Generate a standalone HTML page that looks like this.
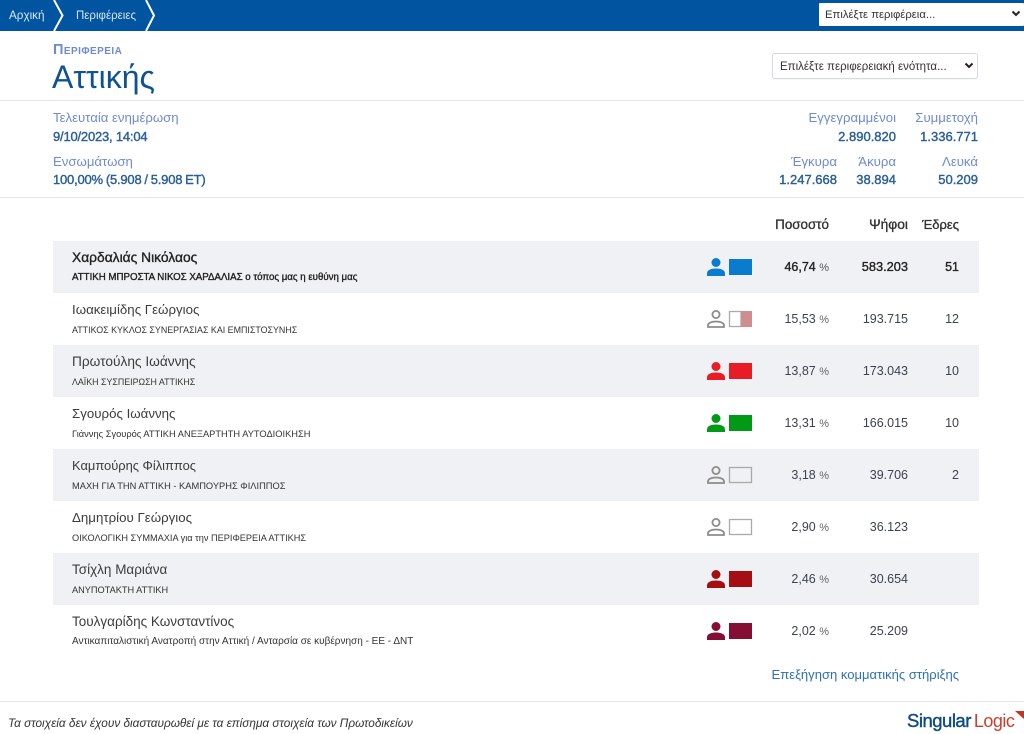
<!DOCTYPE html>
<html lang="el"><head><meta charset="utf-8"><title>Αττικής</title>
<style>
html,body{margin:0;padding:0;background:#fff}
body{width:1024px;height:734px;position:relative;overflow:hidden;font-family:"Liberation Sans",sans-serif;color:#333}
.a{position:absolute;white-space:nowrap;line-height:16px}
.r{text-align:right}
.lb{color:#6f8bd0;font-size:13.200px}
.v{color:#2a5f96;font-size:13px;-webkit-text-stroke:.4px #2a5f96}
.hline{position:absolute;left:0;width:1024px;height:1px;background:#e4e6ea}
.row{position:absolute;left:53px;width:926px;height:52px}
.row.g{background:#f0f1f4}
.nm{left:19px;top:9px;font-size:13.300px;color:#3c3c3c}
.pt{left:19px;top:29px;font-size:9.200px;color:#333}
.pc{right:150px;top:18px;width:90px;text-align:right;font-size:12.500px;color:#3c4250}
.pc small{font-size:11px;color:#666}
.vt{right:71px;top:18px;font-size:12.500px;color:#3c4250}
.st{right:20px;top:18px;font-size:12.500px;color:#3c4250}
.b .nm,.b .pt,.b .pc,.b .vt,.b .st{color:#222;-webkit-text-stroke:.35px #222}
.b .vt{font-size:12.800px}
.b .pc small{-webkit-text-stroke:0;color:#555}
.ic{position:absolute;left:654px;top:17px}
.th{top:217px;font-size:13.400px;color:#333;-webkit-text-stroke:.35px #333}
.sel{position:absolute;background:#fff;box-sizing:border-box;color:#333;font-size:11.500px;line-height:14px}
</style></head><body>

<div style="position:absolute;left:0;top:0;width:1024px;height:31px;background:#0054a0"></div>
<svg style="position:absolute;left:0;top:0" width="170" height="31" viewBox="0 0 170 31" fill="none" stroke="#fff" stroke-width="2">
<path d="M54 0l8.500 15.500L54 31"/><path d="M146 0l8 15.500L146 31"/></svg>
<div class="a" style="left:9px;top:8px;font-size:11.700px;color:#dce8f4">Αρχική</div>
<div class="a" style="left:76px;top:8px;font-size:11.500px;color:#dce8f4">Περιφέρειες</div>
<div class="sel" style="left:819px;top:3px;width:205px;height:23px;border-radius:1px;padding:5px 0 0 6px;font-size:11.300px">Επιλέξτε περιφέρεια...</div>
<svg style="position:absolute;left:1011px;top:10px" width="10" height="8" viewBox="0 0 10 8" fill="none" stroke="#222" stroke-width="2"><path d="M1.500 1.500L5 5l3.500-3.500"/></svg>

<div class="a" style="left:53px;top:42px;font-size:14.500px;font-weight:700;color:#6f8bd0;font-variant:small-caps;letter-spacing:.45px">Περιφερεια</div>
<div class="a" style="left:52px;top:60px;font-size:32px;line-height:34px;color:#0f5290">Αττικής</div>
<div class="sel" style="left:772px;top:53px;width:206px;height:26px;border:1px solid #d5d9e0;border-radius:3px;padding:6px 0 0 7px;font-size:11.500px;box-shadow:0 1px 1px rgba(0,0,0,.04)">Επιλέξτε περιφερειακή ενότητα...</div>
<svg style="position:absolute;left:964px;top:62px" width="10" height="8" viewBox="0 0 10 8" fill="none" stroke="#222" stroke-width="2"><path d="M1.500 1.500L5 5l3.500-3.500"/></svg>

<div class="hline" style="top:100px"></div>
<div class="a lb" style="left:53px;top:110px">Τελευταία ενημέρωση</div>
<div class="a v" style="left:53px;top:129px;letter-spacing:-.2px">9/10/2023, 14:04</div>
<div class="a lb" style="left:53px;top:154px">Ενσωμάτωση</div>
<div class="a v" style="left:53px;top:172px;letter-spacing:-.2px;word-spacing:-.5px">100,00% (5.908 / 5.908 ET)</div>

<div class="a lb r" style="right:128px;top:110px">Εγγεγραμμένοι</div>
<div class="a v r" style="right:128px;top:129px">2.890.820</div>
<div class="a lb r" style="right:46px;top:110px">Συμμετοχή</div>
<div class="a v r" style="right:46px;top:129px">1.336.771</div>
<div class="a lb r" style="right:187px;top:154px">Έγκυρα</div>
<div class="a v r" style="right:187px;top:172px">1.247.668</div>
<div class="a lb r" style="right:128px;top:154px">Άκυρα</div>
<div class="a v r" style="right:128px;top:172px">38.894</div>
<div class="a lb r" style="right:46px;top:154px">Λευκά</div>
<div class="a v r" style="right:46px;top:172px">50.209</div>
<div class="hline" style="top:197px"></div>

<div class="a th r" style="right:195px">Ποσοστό</div>
<div class="a th r" style="right:116px;font-size:13.800px">Ψήφοι</div>
<div class="a th r" style="right:65px;font-size:13px">Έδρες</div>

<div class="row g b" style="top:241px">
<div class="a nm" style="font-size:13.800px">Χαρδαλιάς Νικόλαος</div><div class="a pt" style="font-size:9.700px">ΑΤΤΙΚΗ ΜΠΡΟΣΤΑ ΝΙΚΟΣ ΧΑΡΔΑΛΙΑΣ ο τόπος μας η ευθύνη μας</div>
<svg class="ic" width="46" height="18" viewBox="0 0 46 18"><circle cx="9" cy="4.500" r="4.500" fill="#0a7ccf"/><path d="M0 18v-2.500C0 12 4 10.500 9 10.500s9 1.500 9 5V18z" fill="#0a7ccf"/><rect x="22" y="1" width="23" height="16" fill="#0a7ccf"/></svg>
<div class="a pc">46,74 <small>%</small></div><div class="a vt">583.203</div><div class="a st">51</div></div>

<div class="row" style="top:293px">
<div class="a nm">Ιωακειμίδης Γεώργιος</div><div class="a pt" style="font-size:8.900px">ΑΤΤΙΚΟΣ ΚΥΚΛΟΣ ΣΥΝΕΡΓΑΣΙΑΣ ΚΑΙ ΕΜΠΙΣΤΟΣΥΝΗΣ</div>
<svg class="ic" width="46" height="18" viewBox="0 0 46 18"><circle cx="9" cy="4.500" r="3.600" fill="none" stroke="#8c8c8c" stroke-width="1.800"/><path d="M1 17v-1.500C1 13 4.500 11.500 9 11.500s8 1.500 8 4V17z" fill="none" stroke="#8c8c8c" stroke-width="1.800"/><rect x="22.500" y="1.500" width="11.500" height="15" fill="#fff" stroke="#aaa" stroke-width="1.300"/><rect x="34" y="1" width="11" height="16" fill="#cf8d90"/></svg>
<div class="a pc">15,53 <small>%</small></div><div class="a vt">193.715</div><div class="a st">12</div></div>

<div class="row g" style="top:345px">
<div class="a nm" style="font-size:13.700px">Πρωτούλης Ιωάννης</div><div class="a pt" style="font-size:8.850px">ΛΑΪΚΗ ΣΥΣΠΕΙΡΩΣΗ ΑΤΤΙΚΗΣ</div>
<svg class="ic" width="46" height="18" viewBox="0 0 46 18"><circle cx="9" cy="4.500" r="4.500" fill="#e81c26"/><path d="M0 18v-2.500C0 12 4 10.500 9 10.500s9 1.500 9 5V18z" fill="#e81c26"/><rect x="22" y="1" width="23" height="16" fill="#e81c26"/></svg>
<div class="a pc">13,87 <small>%</small></div><div class="a vt">173.043</div><div class="a st">10</div></div>

<div class="row" style="top:397px">
<div class="a nm">Σγουρός Ιωάννης</div><div class="a pt" style="font-size:9.300px">Γιάννης Σγουρός ΑΤΤΙΚΗ ΑΝΕΞΑΡΤΗΤΗ ΑΥΤΟΔΙΟΙΚΗΣΗ</div>
<svg class="ic" width="46" height="18" viewBox="0 0 46 18"><circle cx="9" cy="4.500" r="4.500" fill="#009a17"/><path d="M0 18v-2.500C0 12 4 10.500 9 10.500s9 1.500 9 5V18z" fill="#009a17"/><rect x="22" y="1" width="23" height="16" fill="#009a17"/></svg>
<div class="a pc">13,31 <small>%</small></div><div class="a vt">166.015</div><div class="a st">10</div></div>

<div class="row g" style="top:449px">
<div class="a nm" style="font-size:12.900px">Καμπούρης Φίλιππος</div><div class="a pt" style="font-size:9.300px">ΜΑΧΗ ΓΙΑ ΤΗΝ ΑΤΤΙΚΗ - ΚΑΜΠΟΥΡΗΣ ΦΙΛΙΠΠΟΣ</div>
<svg class="ic" width="46" height="18" viewBox="0 0 46 18"><circle cx="9" cy="4.500" r="3.600" fill="none" stroke="#8c8c8c" stroke-width="1.800"/><path d="M1 17v-1.500C1 13 4.500 11.500 9 11.500s8 1.500 8 4V17z" fill="none" stroke="#8c8c8c" stroke-width="1.800"/><rect x="22.500" y="1.500" width="22" height="15" fill="#f0f1f4" stroke="#aaa" stroke-width="1.300"/></svg>
<div class="a pc">3,18 <small>%</small></div><div class="a vt">39.706</div><div class="a st">2</div></div>

<div class="row" style="top:501px">
<div class="a nm">Δημητρίου Γεώργιος</div><div class="a pt">ΟΙΚΟΛΟΓΙΚΗ ΣΥΜΜΑΧΙΑ για την ΠΕΡΙΦΕΡΕΙΑ ΑΤΤΙΚΗΣ</div>
<svg class="ic" width="46" height="18" viewBox="0 0 46 18"><circle cx="9" cy="4.500" r="3.600" fill="none" stroke="#8c8c8c" stroke-width="1.800"/><path d="M1 17v-1.500C1 13 4.500 11.500 9 11.500s8 1.500 8 4V17z" fill="none" stroke="#8c8c8c" stroke-width="1.800"/><rect x="22.500" y="1.500" width="22" height="15" fill="#fff" stroke="#aaa" stroke-width="1.300"/></svg>
<div class="a pc">2,90 <small>%</small></div><div class="a vt">36.123</div></div>

<div class="row g" style="top:553px">
<div class="a nm" style="font-size:13.500px">Τσίχλη Μαριάνα</div><div class="a pt">ΑΝΥΠΟΤΑΚΤΗ ΑΤΤΙΚΗ</div>
<svg class="ic" width="46" height="18" viewBox="0 0 46 18"><circle cx="9" cy="4.500" r="4.500" fill="#a50f14"/><path d="M0 18v-2.500C0 12 4 10.500 9 10.500s9 1.500 9 5V18z" fill="#a50f14"/><rect x="22" y="1" width="23" height="16" fill="#a50f14"/></svg>
<div class="a pc">2,46 <small>%</small></div><div class="a vt">30.654</div></div>

<div class="row" style="top:605px">
<div class="a nm" style="font-size:13.500px">Τουλγαρίδης Κωνσταντίνος</div><div class="a pt" style="font-size:10px">Αντικαπιταλιστική Ανατροπή στην Αττική / Ανταρσία σε κυβέρνηση - ΕΕ - ΔΝΤ</div>
<svg class="ic" width="46" height="18" viewBox="0 0 46 18"><circle cx="9" cy="4.500" r="4.500" fill="#850f34"/><path d="M0 18v-2.500C0 12 4 10.500 9 10.500s9 1.500 9 5V18z" fill="#850f34"/><rect x="22" y="1" width="23" height="16" fill="#850f34"/></svg>
<div class="a pc">2,02 <small>%</small></div><div class="a vt">25.209</div></div>

<div class="a r" style="right:65px;top:667px;font-size:13.050px;color:#2e72ad">Επεξήγηση κομματικής στήριξης</div>
<div class="hline" style="top:701px"></div>
<div class="a" style="left:8px;top:715px;font-size:11.800px;font-style:italic;color:#333">Τα στοιχεία δεν έχουν διασταυρωθεί με τα επίσημα στοιχεία των Πρωτοδικείων</div>
<div class="a" style="left:907px;top:709px;font-size:18.500px;line-height:24px;letter-spacing:-.5px;color:#0f4a80;-webkit-text-stroke:.4px #0f4a80">Singular<span style="color:#c8402c;-webkit-text-stroke:0;margin-left:3px;font-size:18px">Logic</span></div>
<svg style="position:absolute;left:1015px;top:711px" width="9" height="9" viewBox="0 0 9 9"><path d="M0 0h9v8z" fill="#c8341f"/></svg>
</body></html>
